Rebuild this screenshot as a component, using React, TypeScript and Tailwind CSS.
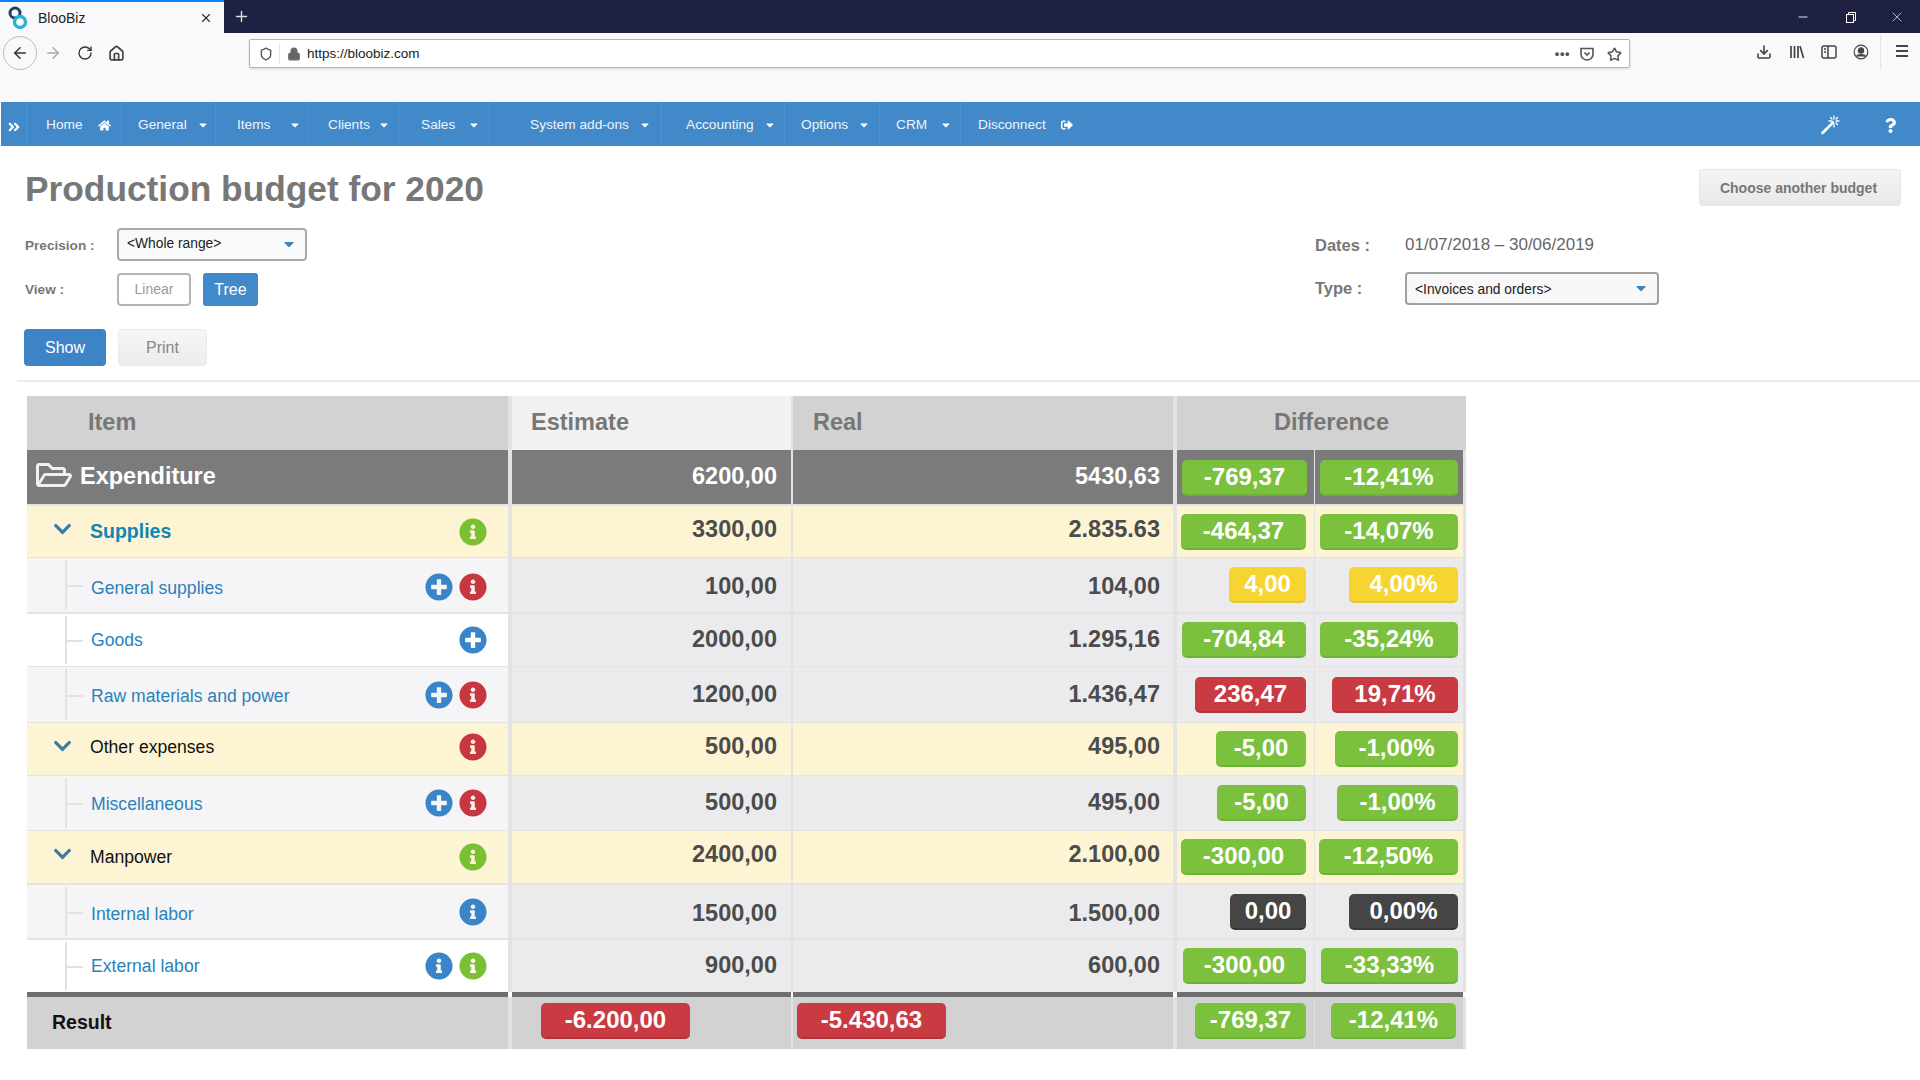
import type { FC, ReactNode } from 'react';
import { ArrowLeft, ArrowRight, Download, House, Lock, Minus, Plus, RotateCw, Shield, Star, X } from 'lucide-react';
import {
  FaAngleDoubleRight,
  FaCaretDown,
  FaChevronDown,
  FaHome,
  FaInfoCircle,
  FaPlusCircle,
  FaQuestion,
  FaRegFolderOpen,
  FaSignOutAlt,
} from 'react-icons/fa';

const itemCol = 'w-[481px] mr-1';
const estCol = 'w-[279px] mr-0.5';
const realCol = 'w-[380px] mr-1';
const diffCol = 'w-[137px] mr-px';
const pctCol = 'w-[148px] mr-[3px]';

const green = 'bg-[#7bc13e] border-[#6eb236]';
const red = 'bg-[#c93a42] border-[#b5323a]';
const yellow = 'bg-[#f6d432] border-[#e8c72c]';
const dark = 'bg-[#454545] border-[#383838]';

interface NavItemProps {
  label: string;
  width: string;
  pad: string;
  gap?: string;
  icon?: ReactNode;
}

const NavItem: FC<NavItemProps> = ({ label, width, pad, gap = 'ml-[10px]', icon }) => (
  <div className={`flex h-full shrink-0 items-center border-r border-[#4c93d1] pt-0.5 ${width} ${pad}`}>
    <span>{label}</span>
    <span className={gap}>{icon ?? <FaCaretDown className="h-3 w-3 text-white" />}</span>
  </div>
);

const Badge: FC<{ text: string; width: string; color: string }> = ({ text, width, color }) => (
  <div className={`flex h-[36px] items-center justify-center rounded-[5px] border-b-2 text-[24px] font-bold text-white ${width} ${color}`}>
    {text}
  </div>
);

const Info: FC<{ color: string }> = ({ color }) => <FaInfoCircle className={`h-7 w-7 ${color}`} />;
const Add = () => <FaPlusCircle className="h-7 w-7 text-[#3a84c9]" />;
const iRed = <Info key="r" color="text-[#c8373f]" />;
const iGreen = <Info key="g" color="text-[#7bbf32]" />;
const iBlue = <Info key="b" color="text-[#3a84c9]" />;

interface RowData {
  label: string;
  group?: boolean;
  link?: boolean;
  bold?: boolean;
  height: string;
  gapBelow: string;
  itemBg: string;
  cellBg: string;
  labelShift?: string;
  valueShift?: string;
  iconShift?: string;
  estimate: string;
  real: string;
  diff: string;
  diffW: string;
  pct: string;
  pctW: string;
  color: string;
  icons: ReactNode[];
}

const rows: RowData[] = [
  { label: 'Supplies', group: true, link: true, bold: true, height: 'h-[51px]', gapBelow: 'mb-px', itemBg: 'bg-[#fdf4d3]', cellBg: 'bg-[#fdf4d3]', valueShift: 'pb-[4px]', estimate: '3300,00', real: '2.835.63', diff: '-464,37', diffW: 'w-[125px]', pct: '-14,07%', pctW: 'w-[138px]', color: green, icons: [iGreen] },
  { label: 'General supplies', link: true, height: 'h-[54px]', gapBelow: 'mb-0.5', itemBg: 'bg-[#f5f5f7]', cellBg: 'bg-[#ebebed]', labelShift: 'pt-[6px]', valueShift: 'pt-[4px]', iconShift: 'pt-[4px]', estimate: '100,00', real: '104,00', diff: '4,00', diffW: 'w-[77px]', pct: '4,00%', pctW: 'w-[109px]', color: yellow, icons: [<Add key="a" />, iRed] },
  { label: 'Goods', link: true, height: 'h-[52px]', gapBelow: 'mb-px', itemBg: 'bg-white', cellBg: 'bg-[#ebebed]', estimate: '2000,00', real: '1.295,16', diff: '-704,84', diffW: 'w-[124px]', pct: '-35,24%', pctW: 'w-[138px]', color: green, icons: [<Add key="a" />] },
  { label: 'Raw materials and power', link: true, height: 'h-[55px]', gapBelow: 'mb-px', itemBg: 'bg-[#f5f5f7]', cellBg: 'bg-[#ebebed]', labelShift: 'pt-[3px]', estimate: '1200,00', real: '1.436,47', diff: '236,47', diffW: 'w-[111px]', pct: '19,71%', pctW: 'w-[126px]', color: red, icons: [<Add key="a" />, iRed] },
  { label: 'Other expenses', group: true, height: 'h-[52px]', gapBelow: 'mb-px', itemBg: 'bg-[#fdf4d3]', cellBg: 'bg-[#fdf4d3]', labelShift: 'pb-[4px]', valueShift: 'pb-[4px]', iconShift: 'pb-[4px]', estimate: '500,00', real: '495,00', diff: '-5,00', diffW: 'w-[90px]', pct: '-1,00%', pctW: 'w-[123px]', color: green, icons: [iRed] },
  { label: 'Miscellaneous', link: true, height: 'h-[54px]', gapBelow: 'mb-px', itemBg: 'bg-[#f5f5f7]', cellBg: 'bg-[#ebebed]', labelShift: 'pt-[3px]', estimate: '500,00', real: '495,00', diff: '-5,00', diffW: 'w-[89px]', pct: '-1,00%', pctW: 'w-[121px]', color: green, icons: [<Add key="a" />, iRed] },
  { label: 'Manpower', group: true, height: 'h-[52px]', gapBelow: 'mb-0.5', itemBg: 'bg-[#fdf4d3]', cellBg: 'bg-[#fdf4d3]', valueShift: 'pb-[4px]', estimate: '2400,00', real: '2.100,00', diff: '-300,00', diffW: 'w-[125px]', pct: '-12,50%', pctW: 'w-[139px]', color: green, icons: [iGreen] },
  { label: 'Internal labor', link: true, height: 'h-[53px]', gapBelow: 'mb-0.5', itemBg: 'bg-[#f5f5f7]', cellBg: 'bg-[#ebebed]', labelShift: 'pt-[6px]', valueShift: 'pt-[4px]', estimate: '1500,00', real: '1.500,00', diff: '0,00', diffW: 'w-[76px]', pct: '0,00%', pctW: 'w-[109px]', color: dark, icons: [iBlue] },
  { label: 'External labor', link: true, height: 'h-[52px]', gapBelow: 'mb-0', itemBg: 'bg-white', cellBg: 'bg-[#ebebed]', estimate: '900,00', real: '600,00', diff: '-300,00', diffW: 'w-[123px]', pct: '-33,33%', pctW: 'w-[137px]', color: green, icons: [iBlue, iGreen] },
];

const Row: FC<{ row: RowData }> = ({ row }) => (
  <div className={`flex ${row.height} ${row.gapBelow}`}>
    <div className={`relative flex items-center ${itemCol} ${row.itemBg} pr-[21px]`}>
      {row.group ? (
        <FaChevronDown className="ml-[25px] mb-[6px] h-[20px] w-[21px] text-[#3a7dab]" />
      ) : (
        <>
          <div className="absolute left-[38px] top-0.5 bottom-0.5 w-0.5 bg-[#e2e2e4]" />
          <div className="absolute left-[40px] top-1/2 h-0.5 w-[16px] bg-[#e2e2e4]" />
        </>
      )}
      <span
        className={`${row.group ? 'ml-[17px]' : 'ml-[64px]'} ${row.labelShift ?? ''} ${row.bold ? 'text-[19.5px] font-bold' : 'text-[17.6px]'} ${
          row.link ? (row.bold ? 'text-[#1285b5]' : 'text-[#2a82bb]') : 'text-[#111]'
        }`}
      >
        {row.label}
      </span>
      <div className={`ml-auto flex items-center gap-[6px] ${row.iconShift ?? ''}`}>{row.icons}</div>
    </div>
    <div className={`flex items-center justify-end pr-[14px] text-[23.5px] font-bold text-[#4c4c4c] ${estCol} ${row.cellBg} ${row.valueShift ?? ''}`}>{row.estimate}</div>
    <div className={`flex items-center justify-end pr-[13px] text-[23.5px] font-bold text-[#4c4c4c] ${realCol} ${row.cellBg} ${row.valueShift ?? ''}`}>{row.real}</div>
    <div className={`flex items-center justify-end pr-[8px] ${diffCol} ${row.cellBg}`}>
      <Badge text={row.diff} width={row.diffW} color={row.color} />
    </div>
    <div className={`flex items-center justify-end pr-[5px] ${pctCol} ${row.cellBg}`}>
      <Badge text={row.pct} width={row.pctW} color={row.color} />
    </div>
  </div>
);

const Arrow = () => <FaCaretDown className="mb-0.5 h-4 w-4 text-[#3f83c0]" />;

const BrowserChrome = () => (
  <>
    <div className="flex h-[33px] items-center bg-[#1f2142]">
      <div className="flex h-full w-[224px] items-center border-t-2 border-[#0a84ff] bg-[#f9f9fb] pl-[8px]">
        <svg viewBox="0 0 20 24" className="h-[24px] w-[20px]" fill="none">
          <circle cx="7" cy="7" r="5" stroke="#1d3f72" strokeWidth="3" />
          <circle cx="12" cy="16" r="5.5" stroke="#27b4cf" strokeWidth="3.4" />
        </svg>
        <span className="ml-[10px] pt-0.5 text-[14px] text-[#222]">BlooBiz</span>
        <X className="ml-auto mr-[11px] h-[14px] w-[14px] text-[#333]" />
      </div>
      <Plus className="ml-[9px] h-[17px] w-[17px] text-[#ddd]" />
      <div className="ml-auto flex items-center text-white">
        <Minus className="mr-[35px] h-[14px] w-[14px]" strokeWidth={1.5} />
        <svg viewBox="0 0 12 12" className="mr-[32px] h-[12px] w-[12px]" fill="none" stroke="currentColor">
          <rect x="1.5" y="3.5" width="7" height="8" />
          <path d="M3.5 3V1.5h7v8H9" />
        </svg>
        <X className="mr-[15px] h-[16px] w-[16px]" strokeWidth={1} />
      </div>
    </div>
    <div className="flex h-[69px] items-start bg-[#f9f9fb]">
      <div className="mt-[3px] ml-[3px] flex h-[34px] w-[34px] items-center justify-center rounded-full border border-[#bbb]">
        <ArrowLeft className="h-[18px] w-[18px] text-[#333]" />
      </div>
      <ArrowRight className="ml-[7px] mt-[11px] h-[18px] w-[18px] text-[#aaa]" />
      <RotateCw className="ml-[15px] mt-[12px] h-[16px] w-[16px] text-[#333]" />
      <House className="ml-[15px] mt-[12px] h-[17px] w-[17px] text-[#444]" strokeWidth={2.4} />
      <div className="ml-[124px] mt-[6px] flex h-[29px] w-[1381px] items-center rounded-[2px] border border-[#b4b4b4] bg-white pt-px shadow-sm">
        <Shield className="ml-[9px] h-[14px] w-[14px] text-[#555]" strokeWidth={2.4} />
        <div className="ml-[6px] h-[20px] w-px bg-[#e4e4e4]" />
        <Lock className="ml-[7px] h-[14px] w-[14px] fill-[#666] text-[#666]" />
        <span className="ml-[6px] text-[13.5px] text-[#222]">https://bloobiz.com</span>
        <span className="ml-auto text-[13px] font-bold tracking-[0.5px] text-[#555]">•••</span>
        <svg viewBox="0 0 16 16" className="ml-[9px] h-[16px] w-[16px]" fill="none" stroke="#555" strokeWidth="1.6">
          <path d="M2 2.5h12v5.5a6 6 0 0 1-12 0z" />
          <path d="M5.5 6.5 8 9l2.5-2.5" />
        </svg>
        <Star className="ml-[12px] mr-[7px] h-[15px] w-[15px] text-[#555]" strokeWidth={2.4} />
      </div>
      <Download className="ml-[126px] mt-[11px] h-[16px] w-[16px] text-[#444]" strokeWidth={2.4} />
      <svg viewBox="0 0 16 16" className="ml-[17px] mt-[11px] h-[16px] w-[16px]" fill="none" stroke="#444" strokeWidth="1.7">
        <path d="M2 2v12M5.5 2v12M9 2v12M11 2l3.5 12" />
      </svg>
      <svg viewBox="0 0 16 16" className="ml-[16px] mt-[11px] h-[16px] w-[16px]" fill="none" stroke="#444" strokeWidth="1.5">
        <rect x="1" y="2" width="14" height="12" rx="2" />
        <path d="M7 2v12M3 5h2M3 8h2" />
      </svg>
      <svg viewBox="0 0 16 16" className="ml-[16px] mt-[11px] h-[16px] w-[16px]" fill="none" stroke="#444" strokeWidth="1.2">
        <circle cx="8" cy="8" r="6.8" />
        <circle cx="8" cy="6.5" r="2.6" fill="#444" />
        <path d="M3.5 12.5c1-2.5 8-2.5 9 0" fill="#444" />
      </svg>
      <div className="ml-[11px] mt-[2px] h-[34px] w-px bg-[#e4e4e4]" />
      <div className="ml-[15px] mt-[12px] flex w-[12px] flex-col gap-[3px]">
        <div className="h-0.5 bg-[#444]" />
        <div className="h-0.5 bg-[#444]" />
        <div className="h-0.5 bg-[#444]" />
      </div>
    </div>
  </>
);

const TopNav = () => (
  <div className="ml-px flex h-[44px] items-center bg-[#4189c9] text-[13.7px] text-[#f0f5fa]">
    <div className="flex h-full w-[26px] items-center justify-center border-r border-[#4c93d1] pt-[5px]">
      <FaAngleDoubleRight className="h-[14px] w-[14px] text-white" />
    </div>
    <NavItem label="Home" width="w-[95px]" pad="pl-[19px]" gap="ml-[15px]" icon={<FaHome className="h-[13px] w-[13px] text-white" />} />
    <NavItem label="General" width="w-[94px]" pad="pl-[16px]" />
    <NavItem label="Items" width="w-[93px]" pad="pl-[21px]" gap="ml-[19px]" />
    <NavItem label="Clients" width="w-[90px]" pad="pl-[19px]" gap="ml-[8px]" />
    <NavItem label="Sales" width="w-[91px]" pad="pl-[22px]" gap="ml-[13px]" />
    <NavItem label="System add-ons" width="w-[172px]" pad="pl-[40px]" />
    <NavItem label="Accounting" width="w-[123px]" pad="pl-[24px]" />
    <NavItem label="Options" width="w-[95px]" pad="pl-[16px]" />
    <NavItem label="CRM" width="w-[81px]" pad="pl-[16px]" gap="ml-[13px]" />
    <div className="flex h-full items-center pl-[17px] pt-0.5">
      <span>Disconnect</span>
      <FaSignOutAlt className="ml-[15px] h-[12px] w-[12px] text-white" />
    </div>
    <svg viewBox="0 0 20 20" className="ml-auto mt-0.5 h-[20px] w-[20px]" fill="none" stroke="#fff" strokeLinecap="round">
      <path d="M2.5 18 13 7.5" strokeWidth="2.6" />
      <path d="M14 1v3M14 9v3M9 6h3M16 6h3M10.5 2.5l1.5 1.5M16 8l1.5 1.5M17.5 2.5 16 4" strokeWidth="1.3" />
    </svg>
    <FaQuestion className="ml-[43px] mr-[22px] mt-0.5 h-[15px] w-[15px] text-white" />
  </div>
);

export default function App() {
  return (
    <div className="h-[1080px] w-[1920px] overflow-hidden bg-white font-['Liberation_Sans',Arial,sans-serif]">
      <BrowserChrome />
      <TopNav />
      <div className="ml-[17px] h-[236px] border-b-2 border-[#ebebeb]">
        <div className="flex items-start pt-[20px]">
          <h1 className="ml-[8px] text-[35.3px] font-bold leading-[46px] text-[#777]">Production budget for 2020</h1>
          <button className="ml-auto mr-[19px] mt-[3px] h-[37px] w-[202px] rounded-[3px] border border-[#e6e6e6] bg-gradient-to-b from-[#f5f5f5] to-[#e8e8e8] pr-[3px] pt-px text-[14px] font-bold text-[#777]">
            Choose another budget
          </button>
        </div>
        <div className="mt-[16px] flex">
          <div className="ml-[8px] w-[1290px]">
            <div className="flex items-center">
              <span className="w-[92px] pt-[3px] text-[13.6px] font-bold text-[#777]">Precision :</span>
              <div className="flex h-[33px] w-[190px] items-center justify-between rounded-[4px] border-2 border-[#a9a9a9] bg-[#fafafa] pl-[8px] pr-[8px] text-[13.8px] text-[#222]">
                &lt;Whole range&gt;
                <Arrow />
              </div>
            </div>
            <div className="mt-[12px] flex items-center">
              <span className="w-[92px] pt-0.5 text-[13.6px] font-bold text-[#777]">View :</span>
              <div className="flex h-[33px] w-[74px] items-center justify-center rounded-[4px] border-2 border-[#b5b5b5] text-[14px] text-[#999]">Linear</div>
              <div className="ml-[12px] flex h-[33px] w-[55px] items-center justify-center rounded-[3px] bg-[#4189c9] text-[16px] text-white">Tree</div>
            </div>
            <div className="mt-[23px] flex">
              <button className="h-[37px] w-[82px] -ml-px rounded-[4px] bg-[#3d84c6] text-[16px] text-white">Show</button>
              <button className="ml-[12px] h-[37px] w-[89px] rounded-[4px] border border-[#eaeaea] bg-gradient-to-b from-[#f6f6f6] to-[#ececec] text-[16px] text-[#888]">Print</button>
            </div>
          </div>
          <div>
            <div className="flex h-[34px] items-center">
              <span className="w-[90px] text-[16.5px] font-bold text-[#777]">Dates :</span>
              <span className="text-[17px] text-[#666]">01/07/2018 – 30/06/2019</span>
            </div>
            <div className="mt-[10px] flex items-center">
              <span className="w-[90px] text-[16.5px] font-bold text-[#777]">Type :</span>
              <div className="flex h-[33px] w-[254px] items-center justify-between rounded-[4px] border-2 border-[#a0a0a0] bg-[#f8f8f8] pl-[8px] pr-[8px] text-[13.8px] text-[#222]">
                <span className="pt-[3px]">&lt;Invoices and orders&gt;</span>
                <Arrow />
              </div>
            </div>
          </div>
        </div>
      </div>
      <div className="ml-[27px] mt-[14px] w-[1439px] bg-[#e3e3e3]">
        <div className="flex h-[54px] text-[23.5px] font-bold text-[#777]">
          <div className={`flex items-center bg-[#d2d2d2] pl-[61px] ${itemCol}`}>Item</div>
          <div className={`flex items-center bg-[#f1f1f1] pl-[19px] ${estCol}`}>Estimate</div>
          <div className={`flex items-center bg-[#d2d2d2] pl-[20px] ${realCol}`}>Real</div>
          <div className="flex w-[289px] items-center justify-center bg-[#d2d2d2] pl-[20px]">Difference</div>
        </div>
        <div className="mb-0.5 flex h-[54px]">
          <div className={`flex items-center bg-[#7b7b7b] pl-[8px] text-[23.5px] font-bold text-white ${itemCol}`}>
            <FaRegFolderOpen className="mb-[4px] h-[32px] w-[38px] text-[#f0f0f0]" />
            <span className="ml-[7px]">Expenditure</span>
          </div>
          <div className={`flex items-center justify-end bg-[#7b7b7b] pr-[14px] text-[23.5px] font-bold text-white ${estCol}`}>6200,00</div>
          <div className={`flex items-center justify-end bg-[#7b7b7b] pr-[13px] text-[23.5px] font-bold text-white ${realCol}`}>5430,63</div>
          <div className={`flex items-center justify-end bg-[#7b7b7b] pr-[7px] pt-0.5 ${diffCol}`}>
            <Badge text="-769,37" width="w-[125px]" color={green} />
          </div>
          <div className={`flex items-center justify-end bg-[#7b7b7b] pr-[5px] pt-0.5 ${pctCol}`}>
            <Badge text="-12,41%" width="w-[138px]" color={green} />
          </div>
        </div>
        {rows.map((row) => (
          <Row key={row.label} row={row} />
        ))}
        <div className="flex h-[5px] bg-white">
          <div className={`bg-[#6f6f6f] ${itemCol}`} />
          <div className={`bg-[#6f6f6f] ${estCol}`} />
          <div className={`bg-[#6f6f6f] ${realCol}`} />
          <div className="w-[286px] bg-[#6f6f6f]" />
        </div>
        <div className="flex h-[52px] items-start">
          <div className={`flex h-full items-center bg-[#d2d2d2] pl-[25px] text-[19.5px] font-bold text-[#111] ${itemCol}`}>Result</div>
          <div className={`flex h-full items-start bg-[#d2d2d2] pl-[29px] pt-[6px] ${estCol}`}>
            <Badge text="-6.200,00" width="w-[149px]" color={red} />
          </div>
          <div className={`flex h-full items-start bg-[#d2d2d2] pl-[4px] pt-[6px] ${realCol}`}>
            <Badge text="-5.430,63" width="w-[149px]" color={red} />
          </div>
          <div className={`flex h-full items-start justify-end bg-[#d2d2d2] pr-[8px] pt-[6px] ${diffCol}`}>
            <Badge text="-769,37" width="w-[111px]" color={green} />
          </div>
          <div className={`flex h-full items-start justify-end bg-[#d2d2d2] pr-[7px] pt-[6px] ${pctCol}`}>
            <Badge text="-12,41%" width="w-[125px]" color={green} />
          </div>
        </div>
      </div>
    </div>
  );
}
